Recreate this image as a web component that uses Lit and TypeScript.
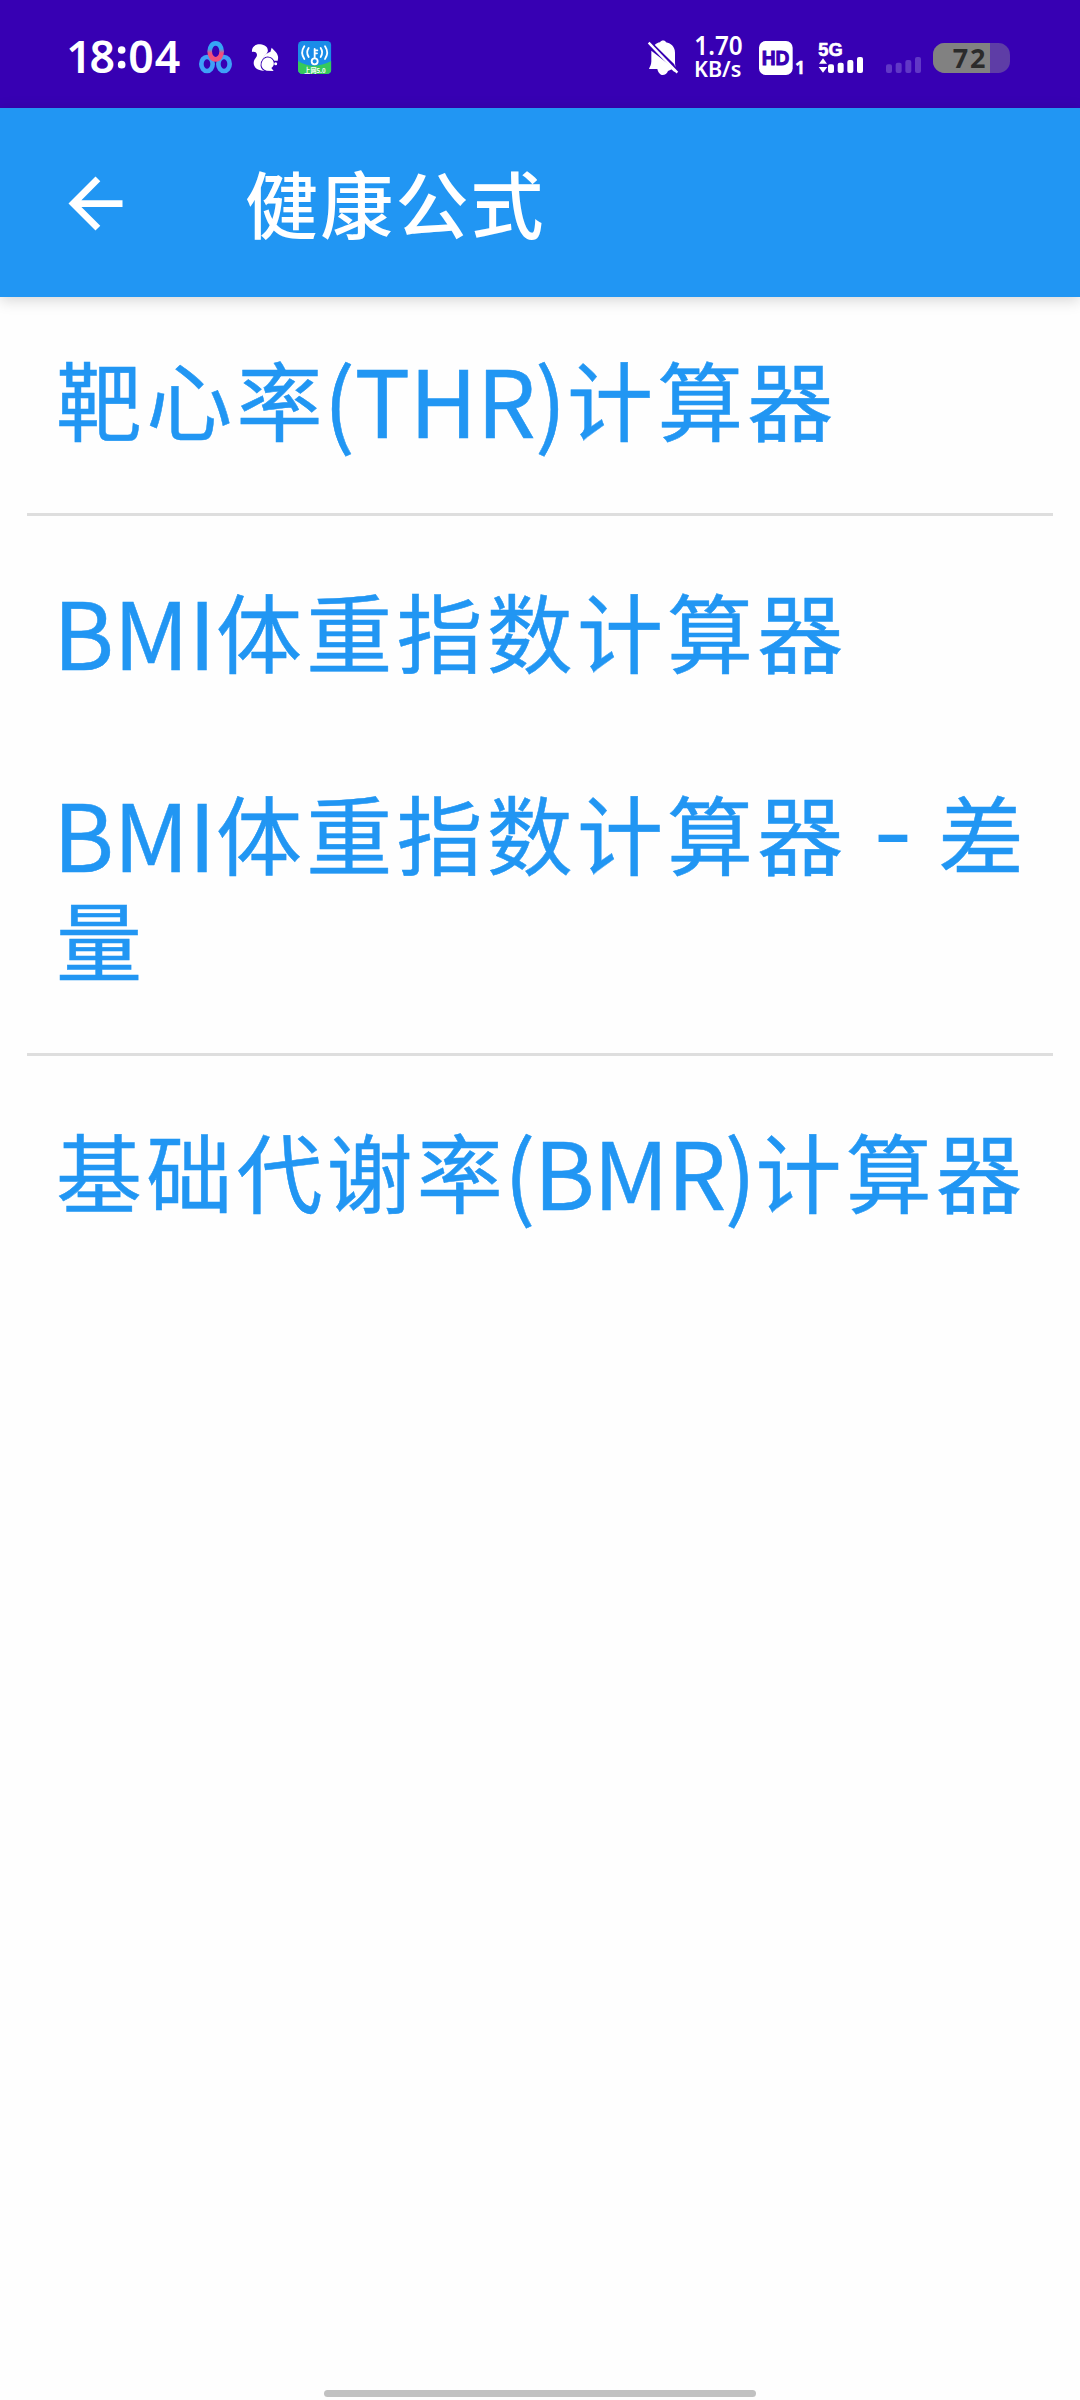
import { LitElement, html, css, svg } from "lit";
import { customElement } from "lit/decorators.js";

@customElement("status-bar")
class StatusBar extends LitElement {
  static styles = css`
    :host {
      display: flex;
      justify-content: space-between;
      height: 108px;
      box-sizing: border-box;
      padding: 20px 60px 8px 65px;
      background: #3700b3;
    }
    .group {
      display: flex;
    }
    svg {
      display: block;
      height: 80px;
      fill: #fff;
      font-family: "Noto Sans", "Noto Sans CJK SC", sans-serif;
      font-weight: 600;
    }
    .mono {
      font-family: "Liberation Sans", sans-serif;
      font-weight: 700;
    }
    .tiny {
      font-family: "Noto Sans CJK SC", sans-serif;
      font-weight: 700;
    }
  `;

  private bars(x: number) {
    return [
      [0, 133],
      [29, 128],
      [58, 120],
      [87, 111],
    ].map(([dx, y]) => svg`<rect x=${x + dx} y=${y} width="18" height=${159 - y} rx="6" />`);
  }

  render() {
    return html`
      <div class="group">
        <svg width="130" viewBox="45 0 390 240">
          <text x="49" y="158" font-size="134" textLength="146">18</text>
          <circle cx="215" cy="90" r="11.5" />
          <circle cx="215" cy="134" r="11.5" />
          <text x="235" y="158" font-size="134" textLength="156">04</text>
        </svg>
        <svg width="45" viewBox="435 0 135 240">
          <defs>
            <linearGradient id="loop" x1="0" y1="0" x2="0" y2="1">
              <stop offset="0.35" stop-color="#35a5f5" />
              <stop offset="0.6" stop-color="#f0507c" />
            </linearGradient>
          </defs>
          <g fill="none" stroke-width="14">
            <ellipse cx="471" cy="132" rx="17" ry="21" stroke="#3fa0f8" />
            <ellipse cx="522" cy="132" rx="17" ry="21" stroke="#3fa0f8" />
            <ellipse cx="497" cy="94" rx="18" ry="24" stroke="url(#loop)" />
          </g>
        </svg>
        <svg width="48" viewBox="570 0 144 240">
          <path
            d="M606 96C604 81 616 72 631 73C646 74 656 84 653 95C649 105 640 108 638 118C634 132 640 146 652 152C630 154 611 146 611 129C611 117 621 113 621 105C621 98 614 94 606 96Z"
          />
          <path d="M636 122C640 106 652 98 661 96L665 83L675 94C683 102 687 112 683 122H674Z" />
          <path
            d="M641 118C652 107 668 114 671 127C673 136 669 141 664 144L671 153L650 152C630 146 632 128 641 118Z"
            stroke="#3700b3" stroke-width="6" paint-order="stroke"
          />
          <circle cx="677" cy="131" r="4.5" />
        </svg>
        <svg width="52" viewBox="714 0 156 240">
          <defs>
            <clipPath id="tile"><rect x="744" y="63" width="100" height="99" rx="13" /></clipPath>
          </defs>
          <g clip-path="url(#tile)">
            <rect x="744" y="63" width="100" height="99" fill="#1b8ce8" />
            <path d="M744 123Q788 152 844 123V162H744Z" fill="#35c95c" />
          </g>
          <g fill="none" stroke="#fff" stroke-width="5.5" stroke-linecap="round">
            <circle cx="794" cy="124" r="9" />
            <path d="M794 113V87M794 91H802M794 100H801" />
            <path d="M776 84Q767 97 776 111M763 79Q750 98 763 117M812 84Q821 97 812 111M825 79Q838 98 825 117" />
          </g>
          <text class="tiny" x="763" y="159" font-size="19" textLength="64" lengthAdjust="spacingAndGlyphs">上网5.0</text>
        </svg>
      </div>
      <div class="group">
        <svg width="45" viewBox="30 0 135 240">
          <path
            d="M64 92L133 156L139 149C137 142 135 136 135 126V98C135 79 121 69 108 67C106 60 93 60 90 67C84 68 78 71 74 75L133 133V146ZM64 92V124C64 135 60 139 57 147H82C85 160 92 165 98 165C105 165 111 161 114 153L127 147Z"
          />
          <path d="M60 66L146 154" stroke="#3700b3" stroke-width="7" />
          <path d="M56 68L142 158" stroke="#fff" stroke-width="7" />
        </svg>
        <svg width="65" viewBox="165 0 195 240">
          <text x="193" y="106" font-size="79" textLength="145" lengthAdjust="spacingAndGlyphs">1.70</text>
          <text x="192" y="171" font-size="64" textLength="142" lengthAdjust="spacingAndGlyphs">KB/s</text>
        </svg>
        <svg width="60" viewBox="360 0 180 240">
          <rect x="387" y="63" width="101" height="102" rx="20" />
          <text
            class="mono" x="395" y="136" font-size="60" fill="#3700b3" stroke="#3700b3" stroke-width="3"
            textLength="83" lengthAdjust="spacingAndGlyphs"
          >HD</text>
          <text x="495" y="163" font-size="54" stroke="#fff" stroke-width="2">1</text>
        </svg>
        <svg width="65" viewBox="0 0 195 240">
          <text
            class="mono" x="25" y="109" font-size="56" stroke="#fff" stroke-width="2"
            textLength="73" lengthAdjust="spacingAndGlyphs"
          >5G</text>
          <path d="M27 131L39 115L51 131ZM26 141L39 158L52 141Z" />
          ${this.bars(54)}
        </svg>
        <svg width="53" viewBox="195 0 159 240">
          <g fill="#6138c6">${this.bars(228)}</g>
        </svg>
        <svg width="92" viewBox="354 0 276 240">
          <defs>
            <clipPath id="cell"><rect x="369" y="69" width="231" height="90" rx="35" /></clipPath>
          </defs>
          <g clip-path="url(#cell)">
            <rect x="369" y="69" width="231" height="90" fill="#5e3da6" />
            <rect x="369" y="69" width="171" height="90" fill="#818181" />
          </g>
          <text x="428" y="144" font-size="81" font-weight="700" fill="#2b2b2b" textLength="98">72</text>
        </svg>
      </div>
    `;
  }
}

@customElement("app-root")
class AppRoot extends LitElement {
  static styles = css`
    :host {
      display: flex;
      flex-direction: column;
      height: 2400px;
      background: #fefefe;
      font-family: "Noto Sans CJK SC", sans-serif;
    }
    .appbar {
      display: flex;
      align-items: center;
      height: 189px;
      box-sizing: border-box;
      padding-left: 55px;
      background: #2196f3;
      color: #fff;
      box-shadow: 0 3px 14px rgba(0, 0, 0, 0.17);
    }
    .back {
      width: 81px;
      height: 81px;
      padding-top: 2px;
      fill: #fff;
    }
    .title {
      margin: 0 0 3px 109px;
      font-size: 73px;
      line-height: 100px;
      font-weight: 500;
      letter-spacing: 2.2px;
    }
    .list {
      flex: 1;
      padding-top: 4px;
    }
    .item {
      padding: 44px 34px 52px 56px;
      font-size: 86px;
      line-height: 106px;
      letter-spacing: 4.2px;
      color: #2196f3;
      -webkit-text-stroke: 0.5px #2196f3;
    }
    .latin {
      margin-left: -3px;
      margin-right: 1px;
      font-size: 93px;
      line-height: 0;
      letter-spacing: -0.6px;
      vertical-align: -2.5px;
    }
    .latin.tight {
      letter-spacing: -1.6px;
    }
    .dash {
      font-family: Inter, sans-serif;
      font-size: 90px;
      line-height: 0;
      letter-spacing: -0.5px;
      vertical-align: 3px;
      -webkit-text-stroke: 0;
    }
    .divider {
      height: 3px;
      margin: 10px 27px 17px;
      background: #dedede;
    }
    .home {
      align-self: center;
      width: 432px;
      height: 7px;
      margin-bottom: 3px;
      border-radius: 4px;
      background: #c1c1c1;
    }
  `;

  render() {
    return html`
      <status-bar></status-bar>
      <header class="appbar">
        <svg class="back" viewBox="0 0 24 24">
          <path d="M20 11H7.83l5.59-5.59L12 4l-8 8 8 8 1.41-1.41L7.83 13H20v-2z" />
        </svg>
        <h1 class="title">健康公式</h1>
      </header>
      <main class="list">
        <div class="item">靶心率<span class="latin">(THR)</span>计算器</div>
        <div class="divider"></div>
        <div class="item"><span class="latin">BMI</span>体重指数计算器</div>
        <div class="item"><span class="latin">BMI</span>体重指数计算器<span class="dash"> - </span>差量</div>
        <div class="divider"></div>
        <div class="item">基础代谢率<span class="latin tight">(BMR)</span>计算器</div>
      </main>
      <div class="home"></div>
    `;
  }
}
